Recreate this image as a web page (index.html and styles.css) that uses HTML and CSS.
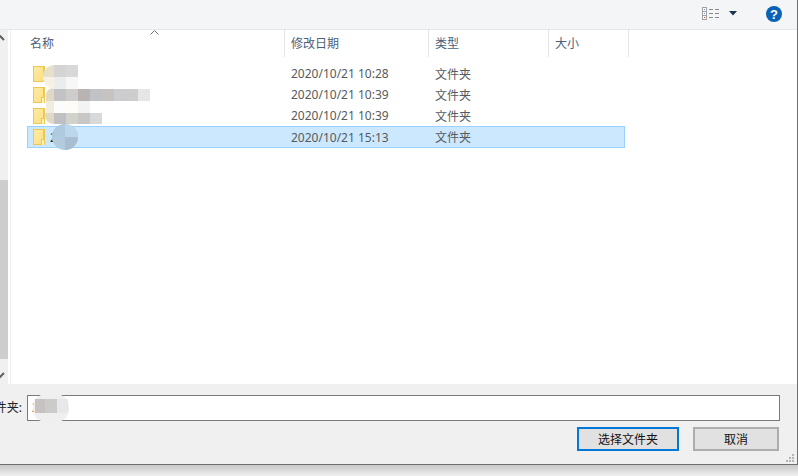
FILE: index.html
```html
<!DOCTYPE html>
<html lang="zh-CN">
<head>
  <meta charset="UTF-8" />
  <title>选择文件夹</title>
  <link rel="stylesheet" href="styles.css">
</head>
<body>
  <div class="dialog">
    <div class="toolbar">
      <svg class="view-icon" width="18" height="14" viewBox="0 0 18 14">
        <rect x="0.5" y="0.5" width="4" height="12" fill="#fff" stroke="#a0a0a0"/>
        <path d="M0 4.5h5M0 8.5h5" stroke="#a0a0a0"/>
        <rect x="2" y="2" width="1" height="1" fill="#6a8fc0"/>
        <rect x="2" y="6" width="1" height="1" fill="#6a8fc0"/>
        <rect x="2" y="10" width="1" height="1" fill="#c04040"/>
        <path d="M7 2.5h4M13 2.5h4M7 6.5h4M13 6.5h4M7 10.5h4M13 10.5h4" stroke="#8a8a8a"/>
      </svg>
      <svg class="view-arrow" width="8" height="5" viewBox="0 0 8 5"><path d="M0 0h8L4 4.5z" fill="#1c3350"/></svg>
      <svg class="help-icon" width="16" height="16" viewBox="0 0 16 16">
        <circle cx="8" cy="8" r="8" fill="#0a62b8"/>
        <text x="8" y="12.5" text-anchor="middle" class="help-mark">?</text>
      </svg>
    </div>

    <div class="middle">
      <div class="scrollbar">
        <svg class="scroll-arrow" width="8" height="8" viewBox="0 0 8 8"><path d="M-1 1l5 5" stroke="#606060" stroke-width="2" fill="none"/></svg>
        <div class="scroll-thumb"></div>
        <svg class="scroll-arrow" width="8" height="8" viewBox="0 0 8 8"><path d="M-1 6l5-5" stroke="#606060" stroke-width="2" fill="none"/></svg>
      </div>

      <div class="files">
        <svg class="sort-arrow" width="9" height="5" viewBox="0 0 9 5"><path d="M0.5 4.5l4-4 4 4" stroke="#707070" fill="none"/></svg>

        <div class="headers">
          <div class="col col-name">名称</div>
          <div class="col col-date">修改日期</div>
          <div class="col col-type">类型</div>
          <div class="col col-size">大小</div>
        </div>

        <div class="rows">
          <div class="row">
            <div class="cell-name"><span class="folder"></span></div>
            <div class="cell-date">2020/10/21 10:28</div>
            <div class="cell-type">文件夹</div>
          </div>
          <div class="row">
            <div class="cell-name"><span class="folder tabbed"></span></div>
            <div class="cell-date">2020/10/21 10:39</div>
            <div class="cell-type">文件夹</div>
          </div>
          <div class="row">
            <div class="cell-name"><span class="folder tabbed"></span></div>
            <div class="cell-date">2020/10/21 10:39</div>
            <div class="cell-type">文件夹</div>
          </div>
          <div class="row selected">
            <div class="cell-name"><span class="folder tabbed"></span><span class="name-text">2</span></div>
            <div class="cell-date">2020/10/21 15:13</div>
            <div class="cell-type">文件夹</div>
          </div>
        </div>

        <!-- pixelated cover over the file names -->
        <svg class="smear" width="140" height="90" viewBox="40 62 140 90">
          <circle cx="56" cy="77" r="12" fill="#f7f1e4"/>
          <path d="M44 77a12 12 0 0 1 11-12v12z" fill="#e6dfc9"/>
          <rect x="55" y="65" width="12" height="12" fill="#d4d4d4"/>
          <rect x="67" y="65" width="12" height="12" fill="#d8d8d8"/>
          <rect x="55" y="77" width="12" height="12" fill="#ebecec"/>
          <rect x="67" y="77" width="12" height="12" fill="#f7f7f7"/>

          <path d="M47 101v-7a6 6 0 0 1 8-5v12z" fill="#e0d8c4"/>
          <rect x="47" y="101" width="8" height="12" fill="#f0ecdf"/>
          <rect x="55" y="89" width="12" height="12" fill="#c3c3c5"/>
          <rect x="67" y="89" width="12" height="12" fill="#cfcdcc"/>
          <rect x="79" y="89" width="12" height="12" fill="#b9b4b2"/>
          <rect x="91" y="89" width="12" height="12" fill="#c0c2c5"/>
          <rect x="103" y="89" width="12" height="12" fill="#c6c3c1"/>
          <rect x="115" y="89" width="12" height="12" fill="#cbcccf"/>
          <rect x="127" y="89" width="12" height="12" fill="#cdcdcd"/>
          <rect x="139" y="89" width="12" height="12" fill="#e6e6e7"/>
          <rect x="55" y="101" width="12" height="12" fill="#fcfcfb"/>
          <rect x="67" y="101" width="12" height="12" fill="#fdfcf7"/>
          <rect x="79" y="101" width="12" height="12" fill="#f3f3f4"/>

          <path d="M46 113h9v11a9 9 0 0 1-9-11z" fill="#e0d9c6"/>
          <rect x="55" y="113" width="12" height="11" fill="#c0bfc1"/>
          <rect x="67" y="113" width="12" height="11" fill="#d2d2cd"/>
          <rect x="79" y="113" width="12" height="11" fill="#c9c6c6"/>
          <rect x="91" y="113" width="12" height="11" fill="#d8d9db"/>

          <circle cx="66" cy="137" r="13" fill="#b2cbdf"/>
          <path d="M66 124a13 13 0 0 0-13 13h13z" fill="#afc9de"/>
          <path d="M66 124a13 13 0 0 1 13 13h-13z" fill="#bcd6ea"/>
          <path d="M66 137h13a13 13 0 0 1-13 13z" fill="#a9bfd1"/>
        </svg>
      </div>
    </div>

    <div class="bottom">
      <div class="name-row">
        <label class="name-label">文件夹:</label>
        <div class="name-input">
          <span>2</span>
          <svg class="smear-input" width="38" height="28" viewBox="0 0 38 28">
            <rect x="1" y="0" width="36" height="28" rx="13" fill="#efefef"/>
            <rect x="3" y="5" width="10" height="14" fill="#c6c2c1"/>
            <rect x="13" y="5" width="12" height="14" fill="#cbccc9"/>
            <rect x="25" y="5" width="11" height="14" fill="#e8e8ea"/>
          </svg>
        </div>
      </div>
      <div class="actions">
        <button class="btn primary">选择文件夹</button>
        <button class="btn">取消</button>
      </div>
      <svg class="grip" width="10" height="10" viewBox="0 0 10 10" fill="#b4b4b4">
        <rect x="6" y="0" width="2" height="2"/>
        <rect x="3" y="3" width="2" height="2"/>
        <rect x="6" y="3" width="2" height="2"/>
        <rect x="0" y="6" width="2" height="2"/>
        <rect x="3" y="6" width="2" height="2"/>
        <rect x="6" y="6" width="2" height="2"/>
      </svg>
    </div>
  </div>
</body>
</html>
```

FILE: styles.css
```css
html, body {
  margin: 0;
  height: 476px;
  overflow: hidden;
}

body {
  background: linear-gradient(#c8c8c8 465px, #f0f0f0 476px);
  font-family: "Noto Sans", "Noto Sans CJK SC", sans-serif;
  font-size: 12px;
}

.dialog {
  width: 797px;
  height: 464px;
  display: flex;
  flex-direction: column;
  background: #f0f0f0;
  border-bottom: 1px solid #6f6f6f;
  border-right: 1px solid #6f6f6f;
}

.toolbar {
  height: 27px;
  flex: none;
  display: flex;
  align-items: center;
  justify-content: flex-end;
  background: #f4f5f7;
  border-bottom: 1px solid #e6e7e9;
  padding: 0 15px 2px 0;
}

.view-icon {
  margin-right: 9px;
}

.view-arrow {
  margin-right: 29px;
}

.help-icon {
  display: block;
}

.help-mark {
  font-family: "Liberation Sans", sans-serif;
  font-size: 13px;
  font-weight: bold;
  fill: #fff;
}

.middle {
  flex: 1;
  display: flex;
  min-height: 0;
}

.scrollbar {
  width: 8px;
  flex: none;
  display: flex;
  flex-direction: column;
  padding: 4px 0;
  box-sizing: border-box;
}

.scroll-thumb {
  margin: 138px 0 13px;
  flex: 1;
  background: #cdcdcd;
}

.scroll-arrow {
  display: block;
  flex: none;
}

.files {
  flex: 1;
  position: relative;
  background: #fff;
  padding-left: 19px;
}

.files::before {
  content: "";
  position: absolute;
  left: 2px;
  top: 0;
  bottom: 0;
  width: 1px;
  background: #f0f0f0;
}

.sort-arrow {
  position: absolute;
  left: 142px;
  top: 0;
}

.headers {
  display: flex;
  height: 27px;
  color: #4c607a;
}

.col {
  box-sizing: border-box;
  padding: 4px 0 0 6px;
  line-height: 20px;
  border-right: 1px solid #e5e5e5;
}

.col-name {
  width: 258px;
  padding-left: 3px;
}

.col-date {
  width: 144px;
}

.col-type {
  width: 120px;
}

.col-size {
  width: 80px;
}

.rows {
  margin-top: 6px;
  color: #5a5a5a;
}

.row {
  display: flex;
  align-items: center;
  width: 598px;
  height: 21px;
  box-sizing: border-box;
  border: 1px solid transparent;
}

.row.selected {
  height: 22px;
  background: #cce8ff;
  border-color: #99d1ff;
}

.cell-name {
  width: 257px;
  padding-left: 5px;
  box-sizing: border-box;
  display: flex;
  align-items: center;
}

.cell-date {
  width: 144px;
  padding-left: 6px;
  box-sizing: border-box;
}

.cell-type {
  padding-left: 6px;
}

.name-text {
  margin-left: 5px;
  color: #222;
}

.folder {
  position: relative;
  display: block;
  width: 9px;
  height: 14px;
  background: linear-gradient(135deg, #fdeba0, #fcdf85);
  border: 1px solid #ecc850;
  border-width: 1px 2px 1px 1px;
}

.folder.tabbed::after {
  content: "";
  position: absolute;
  right: -2px;
  bottom: -1px;
  width: 2px;
  height: 5px;
  border: 1px solid #ecc850;
  border-bottom: none;
  background: #fff3c4;
}

.smear {
  position: absolute;
  left: 31px;
  top: 32px;
}

.bottom {
  height: 80px;
  flex: none;
  position: relative;
  box-sizing: border-box;
  padding: 11px 17px 0 0;
}

.name-row {
  display: flex;
  height: 26px;
}

.name-label {
  width: 22px;
  flex: none;
  display: flex;
  justify-content: flex-end;
  white-space: nowrap;
  line-height: 26px;
  margin-right: 5px;
  color: #222;
}

.name-input {
  flex: 1;
  position: relative;
  box-sizing: border-box;
  background: #fff;
  border: 1px solid #7a7a7a;
  line-height: 24px;
  padding-left: 4px;
  color: #222;
}

.smear-input {
  position: absolute;
  left: 4px;
  top: -2px;
}

.actions {
  display: flex;
  justify-content: flex-end;
  gap: 14px;
  margin: 6px 1px 0 0;
}

.btn {
  width: 86px;
  height: 24px;
  padding: 0;
  box-sizing: border-box;
  font: inherit;
  color: #111;
  background: #e1e1e1;
  border: 2px solid #adadad;
}

.btn.primary {
  width: 102px;
  border-color: #0078d7;
}

.grip {
  position: absolute;
  right: 1px;
  bottom: 0;
}
```
